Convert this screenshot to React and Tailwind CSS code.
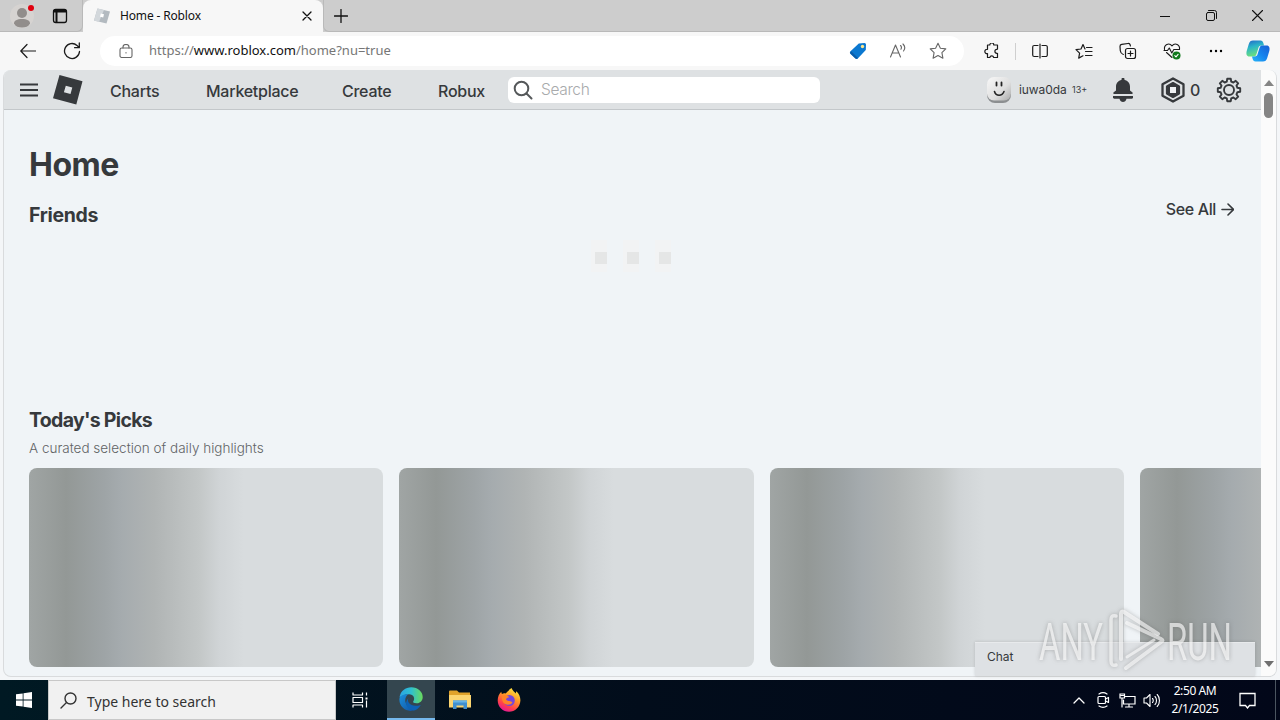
import React from 'react';

const navLinks = [
    { label: 'Charts', className: 'w-[96px]' },
    { label: 'Marketplace', className: 'w-[136px]' },
    { label: 'Create', className: 'w-[96px]' },
    { label: 'Robux', className: 'w-[70px]' },
];

function Line({ size = 20, box = 20, width = 1.2, className = '', children }) {
    return (
        <svg width={size} height={size} viewBox={`0 0 ${box} ${box}`} fill="none" stroke="currentColor" strokeWidth={width} strokeLinecap="round" strokeLinejoin="round" className={`shrink-0 ${className}`}>
            {children}
        </svg>
    );
}

function Cell({ className, children }) {
    return <div className={`flex shrink-0 items-center justify-center ${className}`}>{children}</div>;
}

function TabStrip() {
    return (
        <div className="flex h-8 shrink-0 bg-[#cdcdcd] text-[#111]">
            <div className="flex w-[83px] shrink-0 rounded-br-md border-r border-b border-[#b9b9b9]">
                <Cell className="w-11">
                    <svg width="26" height="26" viewBox="0 0 26 26">
                        <circle cx="13" cy="13" r="12" fill="#d6d3d1" />
                        <circle cx="13" cy="10" r="5" fill="#918d8b" />
                        <path d="M5 20.500c0-3 3-4.500 8-4.500s8 1.500 8 4.500c-1.500 3-4.500 4-8 4s-6.500-1-8-4z" fill="#918d8b" />
                        <circle cx="22" cy="5" r="3" fill="#e0000f" />
                    </svg>
                </Cell>
                <Cell className="w-8">
                    <Line size={16} box={16} width={1.3}>
                        <rect x="1.500" y="1.500" width="13" height="13" rx="2.200" />
                        <path d="M1.500 3.500h13M2 2.500h12M4.500 4v10.500" strokeWidth="2" strokeLinecap="butt" />
                    </Line>
                </Cell>
            </div>
            <div className="flex w-[240px] shrink-0 items-center rounded-t-lg bg-[#f7f7f7] pl-[10px]">
                <svg width="18" height="18" viewBox="0 0 18 18" className="shrink-0">
                    <path d="M4.500 1.500L17 4.500 13.500 16.500 1 13.500z" fill="#b3bac0" />
                    <path d="M4.500 1.500L11 3 6 15 1 13.500z" fill="#d3d8dc" />
                    <path d="M7.800 6.500l3.200.8-.8 3.200-3.200-.8z" fill="#fff" />
                </svg>
                <span className="ml-[9px] flex-1 font-['Noto_Sans',sans-serif] text-[12px] tracking-[-0.150px] whitespace-nowrap">Home - Roblox</span>
                <Cell className="w-8 pr-px">
                    <Line size={10} box={10} width={1.3}><path d="M1 1l8 8M9 1l-8 8" /></Line>
                </Cell>
            </div>
            <div className="flex flex-1 rounded-bl-md border-b border-l border-[#b9b9b9]">
                <Cell className="w-[33px]">
                    <Line size={14} box={14} width={1.3}><path d="M7 .5v13M.5 7h13" /></Line>
                </Cell>
                <div className="ml-auto flex">
                    <Cell className="w-[46px]"><Line size={10} box={10} width={1}><path d="M0 5.500h10" /></Line></Cell>
                    <Cell className="w-[46px]">
                        <Line size={11} box={11} width={1}>
                            <rect x=".5" y="2.500" width="8" height="8" rx="1.500" />
                            <path d="M2.500 .5H8.500a2 2 0 0 1 2 2v6" />
                        </Line>
                    </Cell>
                    <Cell className="w-[46px]"><Line size={11} box={11} width={1.1}><path d="M.5 .5l10 10M10.500 .5l-10 10" /></Line></Cell>
                </div>
            </div>
        </div>
    );
}

function Toolbar() {
    return (
        <div className="flex h-[38px] shrink-0 items-center bg-[#f7f7f7] pl-2 text-[#1b1b1b]">
            <Cell className="w-10">
                <Line size={16} box={16} width={1.2}><path d="M15.500 8H.8M7 1.500L.8 8 7 14.500" /></Line>
            </Cell>
            <Cell className="w-12">
                <Line size={18} box={18} width={1.3}><path d="M16.500 9.500A7.500 7.500 0 1 1 14 3.400L16 5.500M16.300 1v4.700h-4.700" /></Line>
            </Cell>
            <div className="ml-1 flex h-[30px] w-[864px] items-center rounded-full bg-white pr-[6px] pl-[19px]">
                <Line size={14} box={14} width={1.1} className="text-[#666]">
                    <rect x="1" y="4" width="12" height="9.500" rx="1.800" />
                    <path d="M4 4V3a3 2.500 0 0 1 6 0v1M7 8.500v.4" />
                </Line>
                <span className="ml-4 flex-1 font-['Noto_Sans',sans-serif] text-[13px] whitespace-nowrap text-[#767676]">
                    https://<span className="text-[#111]">www.roblox.com</span>/home?nu=true
                </span>
                <Cell className="w-10">
                    <svg width="18" height="18" viewBox="0 0 18 18">
                        <path d="M9.800 1.500L15.500 1A1.600 1.600 0 0 1 17 2.600L16.800 8 9 16.200a2 2 0 0 1-2.900.1L1.500 12a2 2 0 0 1 0-2.800z" fill="#0b78d0" />
                        <path d="M1 11l5.500 5.500L8 17l1-1-7-7z" fill="#0a5ca8" />
                        <circle cx="13.500" cy="4.500" r="1.700" fill="#fde58b" />
                    </svg>
                </Cell>
                <Cell className="w-10">
                    <Line size={18} box={18} width={1.1} className="text-[#666]">
                        <path d="M1.500 15L6.500 3l5 12M3.200 11h6.600M11.500 3.500c1.100 1 1.100 2.500.4 3.700M14 2c2 2 2 5 .5 7" />
                    </Line>
                </Cell>
                <Cell className="w-10">
                    <Line size={18} box={18} width={1.1} className="text-[#666]">
                        <path d="M9 1.200l2.400 5 5.400.7-3.900 3.800 1 5.500L9 13.600l-4.900 2.600 1-5.500L1.200 6.900l5.400-.7z" />
                    </Line>
                </Cell>
            </div>
            <Cell className="ml-[6px] w-11 pr-px">
                <Line size={16} box={16} width={1.2}>
                    <path d="M3.500 2h2.300a2 2 0 0 1 4 0h3.700v3.700a.5.500 0 0 1-.6.600 2 2 0 0 0 0 4 .5.500 0 0 1 .6.600V14.500H9.700a2 2 0 0 0-3.900 0H3.500V10.600a2.200 2.200 0 1 1 0-4.300z" />
                </Line>
            </Cell>
            <div className="mr-[2px] ml-px h-[17px] w-px bg-[#cfcfcf]" />
            <Cell className="w-11">
                <Line size={16} box={16}>
                    <path d="M6 2.500H2.200A1.500 1.500 0 0 0 .7 4v8a1.500 1.500 0 0 0 1.500 1.500H6M10 2.500h3.800A1.500 1.500 0 0 1 15.300 4v8a1.500 1.500 0 0 1-1.500 1.500H10M8 1v14" />
                </Line>
            </Cell>
            <Cell className="w-11">
                <Line size={18} box={18}>
                    <path d="M10 7L8 2.500 6 7 1 7.600l3.600 3.500-.9 5 4.300-2.300M11.500 5.500H17M10.500 9.500H17M10.500 13.500H17" />
                </Line>
            </Cell>
            <Cell className="w-11">
                <Line size={18} box={18}>
                    <rect x="6.500" y="6.500" width="10" height="10" rx="2" />
                    <path d="M11.500 9v5M9 11.500h5M4.300 12.500C2.800 12 1.500 10.500 1.300 8.800L1 4.500A2 2 0 0 1 2.700 2.400l6.300-.9a2 2 0 0 1 2.200 1.500l.2 1" />
                </Line>
            </Cell>
            <Cell className="w-11">
                <Line size={18} box={18} width={1.1}>
                    <path d="M1.500 7.500C.8 3 5.800 0 9 3.800 12.200 0 17.200 3 16.500 7.500M1 8.500h3.500L6.300 6l2.500 5 2-3.500h5.700M3.500 10.500L9 15.500" />
                    <circle cx="13.500" cy="13.500" r="4" fill="#10791c" stroke="none" />
                    <path d="M11.800 13.700l1.200 1.100 2.100-2.400" stroke="#fff" />
                </Line>
            </Cell>
            <Cell className="w-11">
                <svg width="14" height="4" viewBox="0 0 14 4"><circle cx="2" cy="2" r="1.200" /><circle cx="7" cy="2" r="1.200" /><circle cx="12" cy="2" r="1.200" /></svg>
            </Cell>
            <Cell className="w-10">
                <svg width="24" height="24" viewBox="0 0 24 24">
                    <defs>
                        <linearGradient id="cop1" x1="0" y1="0" x2="0.300" y2="1">
                            <stop offset="0" stopColor="#2366c9" />
                            <stop offset=".45" stopColor="#2bb5c8" />
                            <stop offset="1" stopColor="#6ce07d" />
                        </linearGradient>
                        <linearGradient id="cop2" x1="1" y1="0" x2="0" y2="1">
                            <stop offset="0" stopColor="#1a5fd3" />
                            <stop offset=".5" stopColor="#1583ee" />
                            <stop offset="1" stopColor="#27b5f7" />
                        </linearGradient>
                    </defs>
                    <path d="M7 1.500h7.500c1.600 0 2.500 1 3 3L18 6.500h-2.500c-2 0-2.700 1-3.200 2.700L10.500 15c-.6 2-1.500 2.500-3 2.500H3.500C.5 17.500 0 15 .7 12L2.800 5C3.500 2.600 4.900 1.500 7 1.500z" fill="url(#cop1)" />
                    <path d="M17 22.500H9.500c-1.600 0-2.500-1-3-3L6 17.500h2.500c2 0 2.700-1 3.200-2.700L13.500 9c.6-2 1.500-2.500 3-2.500h4c3 0 3.500 2.500 2.800 5.500L21.200 19c-.7 2.400-2.100 3.500-4.200 3.500z" fill="url(#cop2)" />
                </svg>
            </Cell>
        </div>
    );
}

function SiteHeader() {
    return (
        <header className="flex h-10 shrink-0 items-center border-b border-[#c3c7ca] bg-[#dee1e3] pl-4 text-[#36393c]">
            <Line size={18} box={18} width={2}><path d="M0 3.500h18M0 9h18M0 14.500h18" strokeLinecap="butt" /></Line>
            <svg width="30" height="30" viewBox="0 0 30 30" className="ml-[15px] shrink-0">
                <path fillRule="evenodd" d="M6.500 0L29.500 6.200 23.300 29.500 0 23.300zM12.800 10.700L10.900 17.300 17.500 19.100 19.300 12.500z" fill="#36393c" />
            </svg>
            <nav className="ml-[27px] flex shrink-0 pt-[2px] text-[16px] leading-[38px] font-medium tracking-[-0.250px]">
                {navLinks.map((l) => (
                    <a key={l.label} className={`shrink-0 whitespace-nowrap ${l.className}`}>{l.label}</a>
                ))}
            </nav>
            <div className="flex h-[26px] w-[312px] shrink-0 items-center rounded-md bg-white pl-[5px]">
                <Line size={20} box={20} width={2} className="text-[#55585a]"><circle cx="8.500" cy="8.500" r="6.800" /><path d="M13.500 13.500l5 5" /></Line>
                <span className="ml-2 text-[15.500px] font-light tracking-[-0.350px] text-[#a8aaac]">Search</span>
            </div>
            <svg width="26" height="28" viewBox="0 0 26 28" className="ml-[166px] shrink-0">
                <defs>
                    <linearGradient id="face" x1="0" y1="0" x2="1" y2="1">
                        <stop offset="0" stopColor="#f8f8f8" />
                        <stop offset=".6" stopColor="#dedede" />
                        <stop offset="1" stopColor="#aaa" />
                    </linearGradient>
                </defs>
                <rect x="1" y="3" width="24" height="24" rx="8" fill="#8c8f91" />
                <rect x="1" y="1" width="24" height="23.500" rx="7" fill="url(#face)" />
                <path d="M10.500 6.500v3M15.500 6.500v3" stroke="#222" strokeWidth="1.800" strokeLinecap="round" />
                <path d="M8.500 15.500c1.500 5 7.500 5 9.500 0" fill="none" stroke="#222" strokeWidth="1.600" strokeLinecap="round" />
            </svg>
            <span className="ml-[7px] w-[53px] text-[12px] tracking-[-0.100px]">iuwa0da</span>
            <span className="w-[15px] text-[9px] whitespace-nowrap">13+</span>
            <Cell className="ml-[14px] w-11">
                <svg width="20" height="24" viewBox="0 0 20 24" fill="currentColor">
                    <path d="M8.500 1.200a1.500 1.500 0 0 1 3 0v.9c3.300.7 5.500 3.300 5.500 6.700v3.700l2.300 1.800c.8.600.5 1.700-.5 1.700H1.200c-1 0-1.300-1.100-.5-1.700L3 12.500V8.800c0-3.400 2.200-6 5.500-6.700z" />
                    <path d="M0 18h20v1.500c0 .8-.6 1.200-1.300 1.200H13.500C13 23 11.500 24 10 24s-3-1-3.500-3.300H1.300C.6 20.700 0 20.300 0 19.500z" />
                </svg>
            </Cell>
            <Cell className="ml-[15px] w-[26px]">
                <svg width="26" height="26" viewBox="0 0 26 26" fill="none" stroke="currentColor" strokeLinejoin="round">
                    <path d="M13 1.400L23.500 7.300V18.700L13 24.600 2.500 18.700V7.300z" strokeWidth="2.300" />
                    <path d="M13 6L19 9.500V16.500L13 20 7 16.500V9.500z" strokeWidth="2.200" fill="currentColor" />
                    <path d="M10 10h6v6h-6z" fill="#eef0f2" stroke="none" />
                </svg>
            </Cell>
            <span className="ml-[4px] w-[10px] text-[16px] font-medium">0</span>
            <Cell className="ml-4 w-[26px]">
                <Line size={26} box={26} width={1.9}>
                    <path d="M10.800 4.600L11.200 1.800h3.600l.4 2.800 2.200.9 2.300-1.700 2.500 2.500-1.700 2.300.9 2.200 2.800.4v3.600l-2.800.4-.9 2.200 1.700 2.300-2.500 2.500-2.300-1.700-2.200.9-.4 2.800h-3.600l-.4-2.800-2.200-.9-2.300 1.700-2.500-2.500 1.700-2.300-.9-2.200-2.800-.4v-3.600l2.800-.4.9-2.200L3.800 6.300l2.500-2.500 2.300 1.700z" />
                    <circle cx="13" cy="13" r="5" />
                </Line>
            </Cell>
        </header>
    );
}

function LoadingDots() {
    return (
        <div className="flex justify-center gap-4 pr-[28px]">
            {[0, 1, 2].map((i) => (
                <div key={i} className="flex h-8 w-4 flex-col items-end bg-[#f2f3f4] pt-[12px]">
                    <div className="h-3 w-3 bg-[#e5e6e6]" />
                </div>
            ))}
        </div>
    );
}

function HomePage() {
    return (
        <main className="flex-1 overflow-hidden pl-[25px]">
            <h1 className="mt-[35px] text-[32px] leading-10 font-bold tracking-[-0.500px]">Home</h1>
            <div className="mt-[14px] flex h-[34px] justify-between pr-[27px]">
                <h2 className="text-[19.500px] leading-8 font-bold tracking-[-0.350px]">Friends</h2>
                <a className="flex h-5 items-center gap-[5px] text-[16px] font-medium tracking-[-0.350px]">
                    See All
                    <Line size={13} box={13} width={1.6}><path d="M1 6.500h11M7 1l5.500 5.500L7 12" /></Line>
                </a>
            </div>
            <div className="mt-[7px] h-[160px]">
                <LoadingDots />
            </div>
            <h2 className="mt-[4px] text-[19.500px] leading-8 font-bold tracking-[-0.700px]">Today's Picks</h2>
            <p className="mt-[2px] text-[13.500px] leading-5 font-light text-[#606365]">A curated selection of daily highlights</p>
            <div className="mt-[10px] flex gap-4">
                {[0, 1, 2, 3].map((i) => (
                    <div key={i} className="h-[199px] w-[354.250px] shrink-0 rounded-lg bg-[linear-gradient(90deg,#a0a5a4_0px,#939896_37px,#9ea4a6_75px,#a5abae_92px,#b0b4b4_125px,#c3c7c7_170px,#d0d4d6_190px,#d8dcde_215px)]" />
                ))}
            </div>
        </main>
    );
}

function Scrollbar() {
    return (
        <div className="flex w-[15px] shrink-0 flex-col items-center bg-[#fbfbfb] pt-[10px] pb-[9px]">
            <svg width="10" height="6" viewBox="0 0 10 6"><path d="M5 0l5 6H0z" fill="#858585" /></svg>
            <div className="mt-[7px] h-[25px] w-[9px] rounded-full bg-[#858585]" />
            <svg width="10" height="6" viewBox="0 0 10 6" className="mt-auto"><path d="M5 6L0 0h10z" fill="#6f6f6f" /></svg>
        </div>
    );
}

function Watermark() {
    return (
        <svg width="214" height="74" viewBox="-6 -2 214 74" className="absolute top-[603px] left-[1030px] overflow-visible drop-shadow-[0_0_2px_rgba(90,90,90,0.6)]">
            <g fill="#fff" fillOpacity=".65" fontFamily="Roboto, sans-serif" fontWeight="400" fontSize="52">
                <text x="3" y="55" textLength="64" lengthAdjust="spacingAndGlyphs">ANY</text>
                <text x="131" y="55" textLength="65" lengthAdjust="spacingAndGlyphs">RUN</text>
            </g>
            <g fill="none" stroke="#fff" strokeOpacity=".62" strokeLinecap="round" strokeLinejoin="round">
                <path d="M80 11c-4-1-5 1-5 4v41c0 4 2 5 5 4" strokeWidth="3.500" />
                <path d="M122 29L88 7c-2-1-3 0-3 2v45" strokeWidth="4" />
                <path d="M91 18l34 16c2 1 2 2 0 3L90 63" strokeWidth="4" />
                <path d="M91 52l27-17" strokeWidth="3" />
            </g>
        </svg>
    );
}

function Taskbar() {
    return (
        <div className="flex h-10 shrink-0 bg-linear-to-r from-[#001923] via-[#020d1b] to-[#020719] font-['Noto_Sans',sans-serif] text-white">
            <Cell className="w-12">
                <svg width="16" height="16" viewBox="0 0 16 16" fill="#fff"><path d="M0 2.300L6.700 1.400V7.600H0zM7.500 1.300L16 0v7.600H7.500zM0 8.400h6.700v6.200L0 13.700zM7.500 8.400H16V16l-8.500-1.300z" /></svg>
            </Cell>
            <div className="flex w-[288px] shrink-0 items-center border border-[#c8c8c8] bg-[#f1f1f1] pl-[11px] text-[#333]">
                <Line size={17} box={17} width={1.4}><circle cx="10.500" cy="6.500" r="5.500" /><path d="M6.500 10.500L1 16" /></Line>
                <span className="ml-[10px] pt-[2px] text-[14px] whitespace-nowrap">Type here to search</span>
            </div>
            <Cell className="w-[51px] pr-[3px]">
                <Line size={16} box={16} width={1.2}>
                    <path d="M1 .5V3h9.500V.5M1 15.500V13h9.500v2.500M1 5.500h9.500v5H1zM14.500 .5v3M14.500 8.500v7" strokeLinecap="butt" />
                    <path d="M13.500 5.500h2v2h-2z" fill="#fff" stroke="none" />
                </Line>
            </Cell>
            <Cell className="w-12 border-b-2 border-[#76b9ed] bg-[#34464f]">
                <svg width="24" height="24" viewBox="0 0 24 24">
                    <defs>
                        <linearGradient id="edgeTop" x1="0" y1=".3" x2="1" y2=".3">
                            <stop offset="0" stopColor="#2aa4e4" />
                            <stop offset=".5" stopColor="#2fc0d0" />
                            <stop offset="1" stopColor="#6adb5c" />
                        </linearGradient>
                        <linearGradient id="edgeLow" x1="0" y1="0" x2="1" y2="1">
                            <stop offset="0" stopColor="#1b90dd" />
                            <stop offset="1" stopColor="#1152a0" />
                        </linearGradient>
                    </defs>
                    <path d="M.5 10.500C1.500 4 6.500 .3 12.300 .3 19 .3 23.700 5 23.700 10c0 4-3 6.300-6.200 6.300-2.500 0-4-1-3.200-2 2-2.600.5-7-4.300-7-4.500 0-8 2-9.500 3.200z" fill="url(#edgeTop)" />
                    <path d="M.4 12C.7 8.500 5 6.800 9.500 7.200c-2.800 1.600-3.900 5.200-2.900 8.300 1.400 4.200 5.400 6.500 9.400 7.600C8 26 0 20.500 .4 12z" fill="url(#edgeLow)" />
                    <path d="M9.300 11.300c-1.600 4.700 3.200 9.400 12.500 6.600-1.600 3-4.300 5-7 5.600-6.500-1-10.500-7.200-5.500-12.200z" fill="#0d62b5" />
                </svg>
            </Cell>
            <Cell className="w-[49px]">
                <svg width="22" height="20" viewBox="0 0 22 20">
                    <path d="M0 1.500A1 1 0 0 1 1 .5h7l2 2h11v5H0z" fill="#e0a32b" />
                    <path d="M0 5h22v12.500H0z" fill="#fbd570" />
                    <path d="M4 10.500h14V19h-3.500v-3.500h-7V19H4z" fill="#3f8fcf" />
                    <path d="M4 10.500h14v2H4z" fill="#67b4e6" />
                </svg>
            </Cell>
            <Cell className="w-[50px]">
                <svg width="24" height="24" viewBox="0 0 24 24">
                    <defs>
                        <linearGradient id="fox" x1=".8" y1="0" x2=".3" y2="1">
                            <stop offset="0" stopColor="#fff044" />
                            <stop offset=".4" stopColor="#ff9a26" />
                            <stop offset=".75" stopColor="#ff3f4b" />
                            <stop offset="1" stopColor="#e3159b" />
                        </linearGradient>
                    </defs>
                    <path d="M14.500 0c1 2.800 3.200 4 4.500 5.500-.1-1 0-1.800.2-2.300C22 5.500 23.500 9 23.400 12.500 23.200 19 18 23.800 12 23.800S.7 19 .7 12.500C.7 9 2 5.700 4.300 3.700c0 1 .3 1.800.7 2.300 1-.6 2.200-.8 3.500-.5C10 4.500 11 2.500 14.500 0z" fill="url(#fox)" />
                    <circle cx="12.300" cy="12.500" r="5.500" fill="#7446dc" />
                    <path d="M5 8c3-1.500 5.500-.8 7.500 1.200-2 0-3.500 1-3.500 2.300 1.500 2 5 1 6.500 3-2 3-7.500 3-9.500-.5C5 12 4.500 10 5 8z" fill="#ff8427" />
                </svg>
            </Cell>
            <div className="ml-auto flex">
                <Cell className="w-6"><Line size={12} box={12} width={1.3}><path d="M1 9l5-5 5 5" /></Line></Cell>
                <Cell className="w-6">
                    <Line size={16} box={16} width={1.2}><rect x="3" y="4.500" width="7.500" height="7" rx="1" /><path d="M10.500 7l3-1.500v5l-3-1.500M4 2c2.500-1.600 5.500-1.600 8 0M4 14c2.500 1.600 5.500 1.600 8 0" /></Line>
                </Cell>
                <Cell className="w-6">
                    <Line size={17} box={17} width={1.2}><path d="M6 4.500h10v7.500H4.500V8M10 12v3M6.500 15h7M1 2h4.500v4H1zM3 6v9M2 3.500h2.500" strokeLinejoin="miter" /></Line>
                </Cell>
                <Cell className="w-6">
                    <Line size={17} box={17} width={1.1}><path d="M1 6h2.500L7 2.500v12L3.500 11H1zM9.500 6.500c1 1 1 3 0 4M12 4.500c2 2 2 6 0 8M14.200 2.500c3 3 3 9 0 12" /></Line>
                </Cell>
                <div className="flex w-[62px] flex-col items-center justify-center pl-[2px] text-[12px] leading-[18px] tracking-[-0.400px] whitespace-nowrap">
                    <span>2:50 AM</span>
                    <span>2/1/2025</span>
                </div>
                <Cell className="w-[50px] pr-[6px]">
                    <Line size={17} box={17} width={1.3}><path d="M1 1.500h15v12h-5.500L8.500 16l-2-2.500H1z" strokeLinejoin="miter" /></Line>
                </Cell>
                <div className="mr-1 w-px bg-[#4b5560]" />
            </div>
        </div>
    );
}

export default function App() {
    return (
        <div className="relative flex h-[720px] w-[1280px] flex-col overflow-hidden bg-[#f4f6f8]">
            <TabStrip />
            <Toolbar />
            <div className="mx-[3px] mb-[3px] flex min-h-0 flex-1 overflow-hidden rounded-lg border-x border-b border-[#d9dbdd] bg-[#f0f4f7] font-[Inter,sans-serif] text-[#36393c]">
                <div className="flex w-[1257px] flex-col">
                    <SiteHeader />
                    <HomePage />
                </div>
                <Scrollbar />
            </div>
            <Taskbar />

            {/* Chat drawer docked over the page */}
            <div className="absolute top-[642px] left-[975px] h-[34px] w-[280px] border-t border-[#e8eaec] bg-[#dee1e4] pl-3 font-[Inter,sans-serif] text-[12px] leading-[28px] text-[#36393c] shadow-[0_0_3px_rgba(0,0,0,0.15)]">
                Chat
            </div>
            <Watermark />
        </div>
    );
}
